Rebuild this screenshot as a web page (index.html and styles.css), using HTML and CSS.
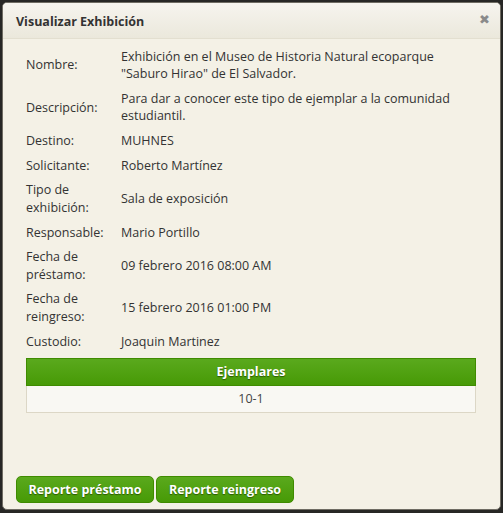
FILE: index.html
```html
<!DOCTYPE html>
<html lang="es">
<head>
<meta charset="utf-8">
<title>Visualizar Exhibición</title>
<link rel="stylesheet" href="styles.css">
</head>
<body>
<div class="dialog">
  <div class="titlebar">
    <span class="title">Visualizar Exhibición</span>
    <span class="close">&#x2716;</span>
  </div>
  <div class="content">
    <div class="info">
      <div class="lbl">Nombre:</div><div class="val">Exhibición en el Museo de Historia Natural ecoparque "Saburo Hirao" de El Salvador.</div>
      <div class="lbl">Descripción:</div><div class="val">Para dar a conocer este tipo de ejemplar a la comunidad estudiantil.</div>
      <div class="lbl">Destino:</div><div class="val">MUHNES</div>
      <div class="lbl">Solicitante:</div><div class="val">Roberto Martínez</div>
      <div class="lbl">Tipo de exhibición:</div><div class="val">Sala de exposición</div>
      <div class="lbl">Responsable:</div><div class="val">Mario Portillo</div>
      <div class="lbl">Fecha de préstamo:</div><div class="val">09 febrero 2016 08:00 AM</div>
      <div class="lbl">Fecha de reingreso:</div><div class="val">15 febrero 2016 01:00 PM</div>
      <div class="lbl">Custodio:</div><div class="val">Joaquin Martinez</div>
    </div>
    <div class="ejemplares">
      <div class="ej-head">Ejemplares</div>
      <div class="ej-row">10-1</div>
    </div>
  </div>
  <div class="buttons">
    <button class="btn">Reporte préstamo</button>
    <button class="btn">Reporte reingreso</button>
  </div>
</div>
</body>
</html>
```
FILE: styles.css
```css
html, body {
  margin: 0;
  padding: 0;
  background: #272725;
}
body {
  font-family: "Open Sans", "Noto Sans", sans-serif;
  font-size: 12.5px;
  color: #333;
  padding: 2px;
}
.dialog {
  box-sizing: border-box;
  width: 499px;
  height: 508px;
  border-radius: 5px;
  border: 1px solid #6f6c63;
  background: #f4f1e6;
  display: flex;
  flex-direction: column;
  overflow: hidden;
}
.titlebar {
  height: 35px;
  flex: none;
  display: flex;
  align-items: center;
  justify-content: space-between;
  padding: 0 10px 0 13px;
  background: linear-gradient(#f6f4ee, #ebe8dc);
  border-bottom: 1px solid #e3dfd0;
}
.title {
  font-weight: bold;
  font-size: 12.5px;
  color: #333;
  margin-top: 2px;
}
.close {
  color: #8a8a8a;
  font-size: 13px;
  margin-top: -4px;
}
.content {
  padding: 5px 24px 0 23px;
}
.info {
  display: grid;
  grid-template-columns: 95px 1fr;
  align-items: center;
  line-height: 17.5px;
}
.lbl, .val {
  padding: 3.6px 0;
}
.lbl {
  padding-right: 10px;
}
.val {
  padding-right: 4px;
}
.ejemplares {
  margin-top: 4px;
  border: 1px solid #dcd7c6;
}
.ej-head {
  height: 26px;
  line-height: 26px;
  text-align: center;
  font-weight: bold;
  color: #fff;
  background: linear-gradient(#5aa91d, #479a06);
  border: 1px solid #3f8b00;
  margin: -1px -1px 0;
  text-shadow: 0 1px 1px #2b5a00;
}
.ej-row {
  height: 26px;
  line-height: 26px;
  text-align: center;
  background: #f9f8f3;
  color: #444;
}
.buttons {
  margin-top: auto;
  display: flex;
  gap: 2px;
  padding: 0 0 6px 13px;
}
.btn {
  width: 138px;
  height: 27px;
  font-family: "Open Sans", "Noto Sans", sans-serif;
  font-size: 12.5px;
  font-weight: bold;
  color: #fff;
  text-shadow: 0 1px 1px #2b5a00;
  background: linear-gradient(#5aa91d, #479a06);
  border: 1px solid #3f8b00;
  border-radius: 5px;
  padding: 0;
}
```
